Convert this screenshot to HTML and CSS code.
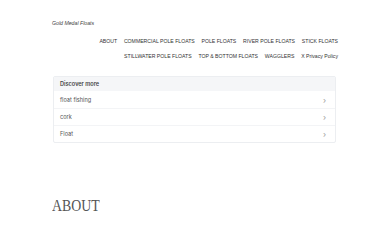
FILE: index.html
```html
<!DOCTYPE html>
<html lang="en">
<head>
  <meta charset="UTF-8" />
  <title>ABOUT – Gold Medal Floats</title>
  <link rel="stylesheet" href="styles.css">
</head>
<body>

<div class="pagina">
  <header class="topo">
    <div class="titulo">Gold Medal Floats</div>
    <nav class="menu">
      <a href="#">ABOUT</a>
      <a href="#">COMMERCIAL POLE FLOATS</a>
      <a href="#">POLE FLOATS</a>
      <a href="#">RIVER POLE FLOATS</a>
      <a href="#">STICK FLOATS</a>
      <a href="#">STILLWATER POLE FLOATS</a>
      <a href="#">TOP &amp; BOTTOM FLOATS</a>
      <a href="#">WAGGLERS</a>
      <a href="#" class="normal">X Privacy Policy</a>
    </nav>
  </header>

  <div class="descobrir">
    <div class="descobrir-topo">Discover more</div>
    <a href="#" class="item">float fishing <span class="seta">&#8250;</span></a>
    <a href="#" class="item">cork <span class="seta">&#8250;</span></a>
    <a href="#" class="item">Float <span class="seta">&#8250;</span></a>
  </div>

  <h1 class="cabecalho"><span>ABOUT</span></h1>
</div>

</body>
</html>
```

FILE: styles.css
```css
* {
  box-sizing: border-box;
}

body {
  margin: 0;
  font-family: "Liberation Sans", Arial, sans-serif;
  background-color: #ffffff;
  color: #333;
}

.pagina {
  width: 286px;
  margin: 0 auto;
  padding-top: 19px;
}

.titulo {
  font-size: 5.2px;
  font-style: italic;
  color: #444;
  height: 8px;
  line-height: 8px;
}

.menu {
  display: flex;
  flex-wrap: wrap;
  justify-content: flex-end;
  column-gap: 6.8px;
  margin-top: 7px;
}

.menu a {
  font-size: 5.15px;
  line-height: 15px;
  color: #333;
  text-decoration: none;
}

.descobrir {
  margin-top: 12px;
  margin-left: 1px;
  width: 283px;
  border: 1px solid #eceef1;
  border-radius: 2px;
  overflow: hidden;
}

.descobrir-topo {
  background-color: #f5f6f8;
  font-family: Inter, "Noto Sans", sans-serif;
  font-size: 5.6px;
  font-weight: 600;
  color: #444;
  height: 14px;
  line-height: 14px;
  padding-left: 6px;
}

.item {
  display: flex;
  justify-content: space-between;
  align-items: center;
  height: 17px;
  padding: 0 9px 0 6px;
  font-family: Inter, "Noto Sans", sans-serif;
  font-size: 5.6px;
  color: #555;
  text-decoration: none;
  border-top: 1px solid #f3f4f6;
}

.item:first-of-type {
  border-top: none;
}

.seta {
  font-size: 8px;
  color: #999;
}

.cabecalho {
  margin: 53px 0 0 0;
  font-family: "Liberation Serif", "Times New Roman", serif;
  font-weight: normal;
  font-size: 16.5px;
  color: #555;
}

.cabecalho span {
  display: inline-block;
  transform: scaleX(0.84);
  transform-origin: left;
}
```
